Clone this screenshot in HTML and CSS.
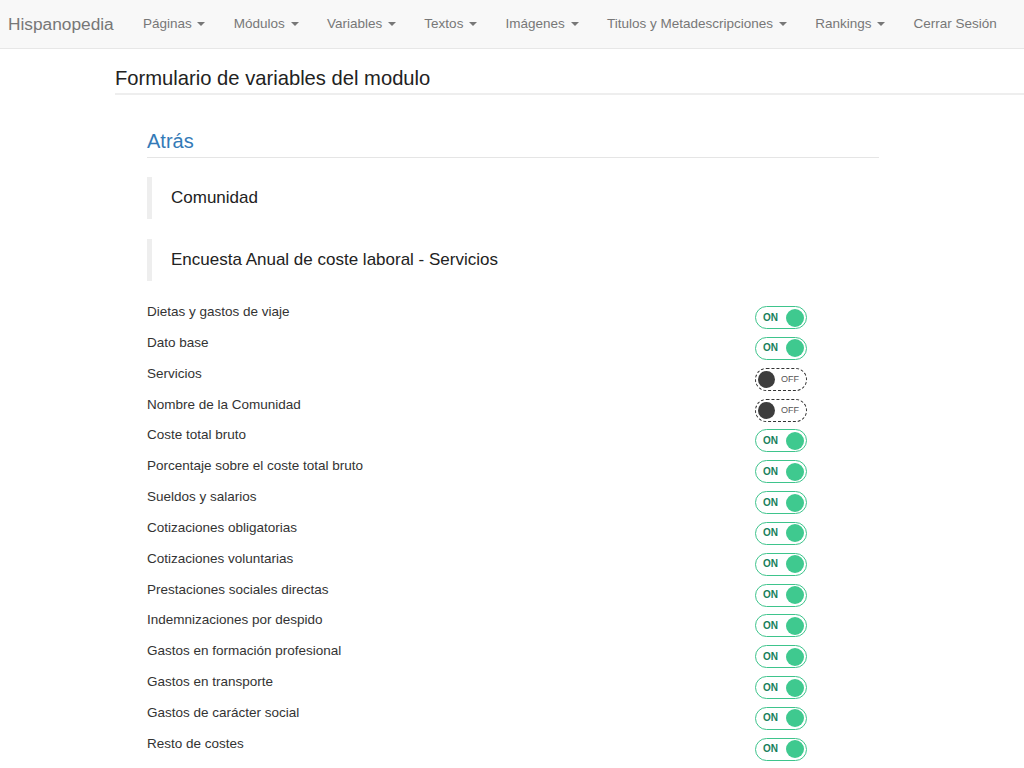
FILE: index.html
```html
<!DOCTYPE html>
<html lang="es">
<head>
<meta charset="utf-8">
<title>Hispanopedia</title>
<link rel="stylesheet" href="styles.css">
</head>
<body>
<nav class="navbar">
  <a class="brand" href="#">Hispanopedia</a>
  <ul class="nav">
    <li><a href="#">Páginas <span class="caret"></span></a></li>
    <li><a href="#">Módulos <span class="caret"></span></a></li>
    <li><a href="#">Variables <span class="caret"></span></a></li>
    <li><a href="#">Textos <span class="caret"></span></a></li>
    <li><a href="#">Imágenes <span class="caret"></span></a></li>
    <li><a href="#">Titulos y Metadescripciones <span class="caret"></span></a></li>
    <li><a href="#">Rankings <span class="caret"></span></a></li>
    <li><a href="#">Cerrar Sesión</a></li>
  </ul>
</nav>
<main class="page">
  <h2 class="page-title">Formulario de variables del modulo</h2>
  <section class="panel">
    <h3 class="back"><a href="#">Atrás</a></h3>
    <blockquote class="quote">Comunidad</blockquote>
    <blockquote class="quote">Encuesta Anual de coste laboral - Servicios</blockquote>
    <div class="rows">
      <div class="row"><span class="label">Dietas y gastos de viaje</span><span class="toggle on"><span class="txt">ON</span><span class="knob"></span></span></div>
      <div class="row"><span class="label">Dato base</span><span class="toggle on"><span class="txt">ON</span><span class="knob"></span></span></div>
      <div class="row"><span class="label">Servicios</span><span class="toggle off"><span class="knob"></span><span class="txt">OFF</span></span></div>
      <div class="row"><span class="label">Nombre de la Comunidad</span><span class="toggle off"><span class="knob"></span><span class="txt">OFF</span></span></div>
      <div class="row"><span class="label">Coste total bruto</span><span class="toggle on"><span class="txt">ON</span><span class="knob"></span></span></div>
      <div class="row"><span class="label">Porcentaje sobre el coste total bruto</span><span class="toggle on"><span class="txt">ON</span><span class="knob"></span></span></div>
      <div class="row"><span class="label">Sueldos y salarios</span><span class="toggle on"><span class="txt">ON</span><span class="knob"></span></span></div>
      <div class="row"><span class="label">Cotizaciones obligatorias</span><span class="toggle on"><span class="txt">ON</span><span class="knob"></span></span></div>
      <div class="row"><span class="label">Cotizaciones voluntarias</span><span class="toggle on"><span class="txt">ON</span><span class="knob"></span></span></div>
      <div class="row"><span class="label">Prestaciones sociales directas</span><span class="toggle on"><span class="txt">ON</span><span class="knob"></span></span></div>
      <div class="row"><span class="label">Indemnizaciones por despido</span><span class="toggle on"><span class="txt">ON</span><span class="knob"></span></span></div>
      <div class="row"><span class="label">Gastos en formación profesional</span><span class="toggle on"><span class="txt">ON</span><span class="knob"></span></span></div>
      <div class="row"><span class="label">Gastos en transporte</span><span class="toggle on"><span class="txt">ON</span><span class="knob"></span></span></div>
      <div class="row"><span class="label">Gastos de carácter social</span><span class="toggle on"><span class="txt">ON</span><span class="knob"></span></span></div>
      <div class="row"><span class="label">Resto de costes</span><span class="toggle on"><span class="txt">ON</span><span class="knob"></span></span></div>
    </div>
  </section>
</main>
</body>
</html>
```
FILE: styles.css
```css
* { box-sizing: border-box; }
html, body { margin: 0; padding: 0; }
body {
  font-family: "Liberation Sans", Arial, sans-serif;
  font-size: 13.5px;
  line-height: 20px;
  color: #333;
  background: #fff;
}
a { text-decoration: none; }

.navbar {
  display: flex;
  align-items: center;
  height: 49px;
  background: #f8f8f8;
  border-bottom: 1px solid #e7e7e7;
  white-space: nowrap;
}
.brand {
  font-size: 17.3px;
  line-height: 20px;
  color: #777;
  padding: 14px 15px 14px 8px;
}
.nav {
  display: flex;
  list-style: none;
  margin: 0;
  padding: 0;
}
.nav a {
  display: block;
  padding: 14px 14.2px;
  color: #777;
  font-size: 13.5px;
  line-height: 20px;
}
.caret {
  display: inline-block;
  width: 0;
  height: 0;
  margin-left: 2px;
  vertical-align: middle;
  border-top: 4px solid #777;
  border-left: 4px solid transparent;
  border-right: 4px solid transparent;
}

.page {
  padding-left: 115px;
}
.page-title {
  margin: 17px 0 0;
  padding-bottom: 3px;
  font-size: 20.2px;
  line-height: 24px;
  font-weight: 400;
  color: #222;
  border-bottom: 2px solid #eee;
}
.panel {
  width: 732px;
  margin-left: 32px;
}
.back {
  margin: 34px 0 0;
  padding-bottom: 4px;
  font-size: 20px;
  line-height: 24px;
  font-weight: 400;
  border-bottom: 1px solid #e5e5e5;
}
.back a { color: #337ab7; }
.quote {
  margin: 20px 0 0;
  padding: 10px 19px;
  border-left: 5px solid #eee;
  font-size: 17px;
  line-height: 22px;
  color: #222;
}
.quote:first-of-type { margin-top: 19px; }
.rows {
  margin-top: 21px;
}
.row {
  display: flex;
  height: 30.85px;
}
.label {
  width: 608px;
  line-height: 20px;
  color: #333;
}
.toggle {
  margin-top: 4px;
  width: 52px;
  height: 23px;
  border-radius: 12px;
  display: flex;
  align-items: center;
  font-size: 10px;
}
.toggle.on {
  border: 1px solid #3ec48c;
  justify-content: space-between;
  padding: 0 2px 0 7px;
}
.toggle.on .txt {
  color: #17805a;
  font-weight: 700;
}
.toggle.on .knob {
  width: 18px;
  height: 18px;
  border-radius: 50%;
  background: #3fc98f;
}
.toggle.off {
  border: 1px dashed #333;
  padding: 0 2px;
  gap: 6px;
}
.toggle.off .knob {
  width: 17px;
  height: 17px;
  border-radius: 50%;
  background: #3d3d3d;
}
.toggle.off .txt {
  color: #555;
  font-size: 9px;
}
```
